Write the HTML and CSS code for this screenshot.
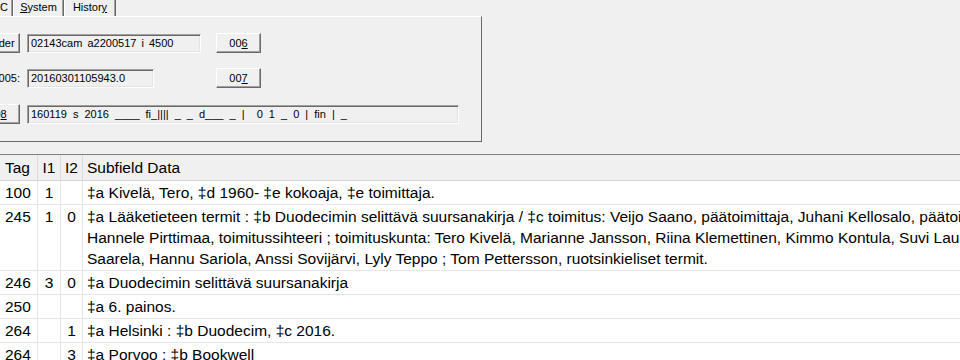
FILE: index.html
```html
<!DOCTYPE html>
<html>
<head>
<meta charset="utf-8">
<link rel="stylesheet" href="styles.css">
</head>
<body>
<div class="tabctl">
  <div class="tabs">
    <div class="tab tab-first">MARC</div>
    <div class="tab tab-sys"><u>S</u>ystem</div>
    <div class="tab tab-his">Histor<u>y</u></div>
  </div>
  <div class="tabpage">
    <div class="frow r1">
      <div class="lcol"><button class="btn">Leader</button></div>
      <div class="field f1">02143cam a2200517 i 4500</div>
      <button class="btn b1">00<u>6</u></button>
    </div>
    <div class="frow r2">
      <div class="lcol"><span class="lbl">005:</span></div>
      <div class="field f2">20160301105943.0</div>
      <button class="btn b2">00<u>7</u></button>
    </div>
    <div class="frow r3">
      <div class="lcol"><button class="btn">00<u>8</u></button></div>
      <div class="field f3">160119 s 2016 ____ fi_|||| _ _ d___ _ |  0 1 _ 0 | fin | _</div>
    </div>
  </div>
</div>
<div class="grid">
  <div class="hdr">
    <div class="c tag">Tag</div>
    <div class="c ind">I1</div>
    <div class="c ind2">I2</div>
    <div class="c data">Subfield Data</div>
  </div>
  <div class="row">
    <div class="c tag">100</div>
    <div class="c ind">1</div>
    <div class="c ind2"></div>
    <div class="c data">‡a Kivelä, Tero, ‡d 1960- ‡e kokoaja, ‡e toimittaja.</div>
  </div>
  <div class="row">
    <div class="c tag">245</div>
    <div class="c ind">1</div>
    <div class="c ind2">0</div>
    <div class="c data">‡a Lääketieteen termit : ‡b Duodecimin selittävä suursanakirja / ‡c toimitus: Veijo Saano, päätoimittaja, Juhani Kellosalo, päätoimittaja,<br>Hannele Pirttimaa, toimitussihteeri ; toimituskunta: Tero Kivelä, Marianne Jansson, Riina Klemettinen, Kimmo Kontula, Suvi Laurila, Heikki<br>Saarela, Hannu Sariola, Anssi Sovijärvi, Lyly Teppo ; Tom Pettersson, ruotsinkieliset termit.</div>
  </div>
  <div class="row">
    <div class="c tag">246</div>
    <div class="c ind">3</div>
    <div class="c ind2">0</div>
    <div class="c data">‡a Duodecimin selittävä suursanakirja</div>
  </div>
  <div class="row">
    <div class="c tag">250</div>
    <div class="c ind"></div>
    <div class="c ind2"></div>
    <div class="c data">‡a 6. painos.</div>
  </div>
  <div class="row">
    <div class="c tag">264</div>
    <div class="c ind"></div>
    <div class="c ind2">1</div>
    <div class="c data">‡a Helsinki : ‡b Duodecim, ‡c 2016.</div>
  </div>
  <div class="row">
    <div class="c tag">264</div>
    <div class="c ind"></div>
    <div class="c ind2">3</div>
    <div class="c data">‡a Porvoo : ‡b Bookwell</div>
  </div>
</div>
</body>
</html>
```
FILE: styles.css
```css
html, body {
  margin: 0;
  padding: 0;
}
body {
  width: 960px;
  height: 360px;
  overflow: hidden;
  background: #f0f0f0;
  font-family: "Liberation Sans", Arial, sans-serif;
  color: #000;
}
.tabctl {
  margin-left: -60px;
  width: 542px;
  font-size: 11px;
}
.tabs {
  display: flex;
  height: 16px;
}
.tab {
  box-sizing: border-box;
  height: 16px;
  line-height: 15px;
  border-left: 1px solid #fff;
  border-right: 1px solid #696969;
  box-shadow: inset -1px 0 #a0a0a0;
  text-align: center;
  white-space: nowrap;
}
.tab-first {
  width: 73px;
  text-align: right;
  padding-right: 4px;
}
.tab-sys { width: 51px; }
.tab-his { width: 52px; }
.tabpage {
  box-sizing: border-box;
  height: 126px;
  border-top: 1px solid #fff;
  border-right: 1px solid #696969;
  border-bottom: 1px solid #696969;
  padding-top: 16px;
  display: flex;
  flex-direction: column;
  word-spacing: 2px;
}
.frow {
  display: flex;
  align-items: center;
  height: 20px;
}
.r2 { margin-top: 15px; }
.r3 { margin-top: 16px; }
.lcol {
  width: 80px;
  flex: none;
  display: flex;
  justify-content: flex-end;
  align-items: center;
}
.btn {
  box-sizing: border-box;
  width: 45px;
  height: 20px;
  margin: 0;
  padding: 0;
  font: inherit;
  font-size: 11px;
  color: #000;
  background: #f0f0f0;
  border-top: 1px solid #fff;
  border-left: 1px solid #fff;
  border-right: 1px solid #696969;
  border-bottom: 1px solid #696969;
  box-shadow: inset -1px -1px #a0a0a0;
  white-space: nowrap;
  flex: none;
}
.field {
  box-sizing: border-box;
  height: 19px;
  line-height: 16px;
  padding: 0 3px;
  margin-left: 7px;
  border-top: 1px solid #a0a0a0;
  border-left: 1px solid #a0a0a0;
  border-right: 1px solid #fff;
  border-bottom: 1px solid #fff;
  box-shadow: inset 1px 1px #696969, inset -1px -1px #e3e3e3;
  white-space: pre;
  overflow: hidden;
  flex: none;
}
.f1 { width: 174px; }
.f2 { width: 127px; }
.f3 { width: 432px; word-spacing: 3px; }
.b1 { margin-left: 15px; }
.b2 { margin-left: 62px; }

.grid {
  margin-top: 12px;
  border-top: 1px solid #808080;
  font-size: 15.5px;
  width: 960px;
  overflow: hidden;
}
.hdr, .row {
  display: flex;
  white-space: nowrap;
}
.hdr {
  height: 26px;
  box-sizing: border-box;
  border-bottom: 1px solid #d6d6d6;
  background: #f0f0f0;
}
.hdr .c {
  line-height: 25px;
}
.row {
  background: #fff;
  border-bottom: 1px solid #e6e6e6;
}
.row .c {
  padding-top: 1px;
  padding-bottom: 1px;
  line-height: 21px;
}
.c {
  box-sizing: border-box;
  flex: none;
  border-right: 1px solid #e3e3e3;
}
.hdr .c { border-right-color: #dcdcdc; }
.tag {
  width: 38px;
  padding-left: 5px;
}
.ind {
  width: 23px;
  text-align: center;
}
.ind2 {
  width: 22px;
  text-align: center;
}
.data {
  flex: 1 0 auto;
  padding-left: 4px;
  border-right: none;
}
```
